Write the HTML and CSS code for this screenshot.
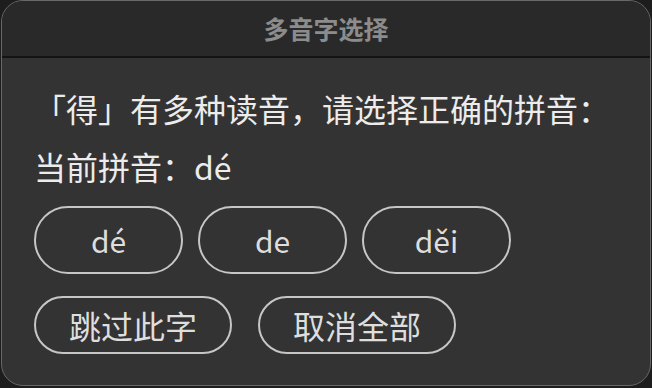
FILE: index.html
```html
<!DOCTYPE html>
<html lang="zh">

<head>
    <meta charset="utf-8">
    <meta name="viewport" content="width=device-width, initial-scale=1.0">
    <title>多音字选择</title>
    <link rel="stylesheet" href="styles.css">
</head>

<body>
    <div class="janela">
        <div class="titulo">多音字选择</div>

        <div class="conteudo">
            <p class="pergunta">「得」有多种读音，请选择正确的拼音：</p>
            <p class="atual">当前拼音：dé</p>

            <div class="linha linha-pinyin">
                <button type="button" class="btn btn-pinyin">dé</button>
                <button type="button" class="btn btn-pinyin">de</button>
                <button type="button" class="btn btn-pinyin">děi</button>
            </div>

            <div class="linha linha-acoes">
                <button type="button" class="btn btn-acao">跳过此字</button>
                <button type="button" class="btn btn-acao">取消全部</button>
            </div>
        </div>
    </div>
</body>

</html>
```

FILE: styles.css
```css
/* fundo fora da janela */
body {
    margin: 0;
    background-color: #1d1d1d;
    font-family: "Noto Sans CJK SC", "Noto Sans", sans-serif;
}

.janela {
    margin: 0 1px 0 1px;
    height: 384px;
    border: 1px solid #686868;
    border-radius: 22px;
    background-color: #333333;
    overflow: hidden;
}

/* barra de titulo */
.titulo {
    height: 55px;
    line-height: 55px;
    background-color: #292929;
    border-bottom: 2px solid #141414;
    text-align: center;
    color: #8c8c8c;
    font-size: 25px;
    font-weight: bold;
}

.conteudo {
    padding: 30px 0 0 32px;
}

p {
    margin: 0;
    font-size: 32px;
    line-height: 40px;
    color: #ececec;
}

.atual {
    margin-top: 18px;
}

.linha {
    display: flex;
}

.linha-pinyin {
    margin-top: 20px;
    gap: 15px;
}

.linha-acoes {
    margin-top: 22px;
    gap: 26px;
}

.btn {
    background: transparent;
    color: #dedede;
    font-family: inherit;
    font-size: 32px;
    border: 2px solid #c6c6c6;
    cursor: pointer;
    outline: none;
    margin: 0;
}

.btn-pinyin {
    width: 149px;
    height: 68px;
    border-radius: 34px;
    padding: 0;
    font-size: 30px;
}

.btn-acao {
    height: 58px;
    border-radius: 29px;
    padding: 0 33px;
}
```
